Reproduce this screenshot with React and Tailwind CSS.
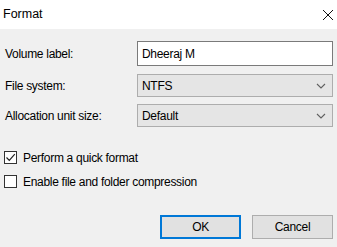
import React from "react";

const Chevron = () => (
  <svg width="10" height="6" viewBox="0 0 10 6" className="shrink-0">
    <polyline points="1,1 5,5 9,1" fill="none" stroke="#606060" strokeWidth="1.1" />
  </svg>
);

const Combo = ({ value }) => (
  <div className="w-[196px] h-[23px] bg-[#e5e5e5] border border-[#adadad] flex items-center justify-between pl-[4px] pr-[6px]">
    <span>{value}</span>
    <Chevron />
  </div>
);

const Check = ({ checked, label }) => (
  <div className="flex items-center h-[13px]">
    <div className="w-[13px] h-[13px] border border-[#333333] bg-white flex items-center justify-center">
      {checked && (
        <svg width="11" height="11" viewBox="0 0 11 11">
          <polyline points="1.5,5.5 4.3,8.3 9.8,2.2" fill="none" stroke="#222" strokeWidth="1.2" />
        </svg>
      )}
    </div>
    <span className="ml-[6px]">{label}</span>
  </div>
);

export default function App() {
  return (
    <div className="w-[337px] h-[247px] bg-[#f0f0f0] text-[12px] text-[#000] font-['Liberation_Sans',Arial,sans-serif] overflow-hidden">
      <div className="h-[29px] bg-white flex items-center justify-between pl-[3px] pr-[3px]">
        <span className="text-[12.5px]">Format</span>
        <svg width="12" height="12" viewBox="0 0 12 12">
          <line x1="1" y1="1" x2="11" y2="11" stroke="#111" strokeWidth="1" />
          <line x1="11" y1="1" x2="1" y2="11" stroke="#111" strokeWidth="1" />
        </svg>
      </div>
      <div className="pt-[12px] pl-[5px] pr-[4px] tracking-[-0.3px]">
        <div className="flex items-center h-[25px]">
          <span className="w-[132px]">Volume label:</span>
          <div className="w-[196px] h-[25px] bg-white border border-[#7a7a7a] flex items-center pl-[4px]">Dheeraj M</div>
        </div>
        <div className="flex items-center h-[23px] mt-[8px]">
          <span className="w-[132px]">File system:</span>
          <Combo value="NTFS" />
        </div>
        <div className="flex items-center h-[23px] mt-[7px]">
          <span className="w-[132px]">Allocation unit size:</span>
          <Combo value="Default" />
        </div>
        <div className="mt-[24px] -ml-[1px] flex flex-col gap-[11px]">
          <Check checked label="Perform a quick format" />
          <Check label="Enable file and folder compression" />
        </div>
        <div className="flex justify-end gap-[11px] mt-[27px]">
          <div className="w-[81px] h-[24px] bg-[#e1e1e1] border-2 border-[#0078d7] flex items-center justify-center">OK</div>
          <div className="w-[81px] h-[24px] bg-[#e1e1e1] border border-[#adadad] flex items-center justify-center">Cancel</div>
        </div>
      </div>
    </div>
  );
}
